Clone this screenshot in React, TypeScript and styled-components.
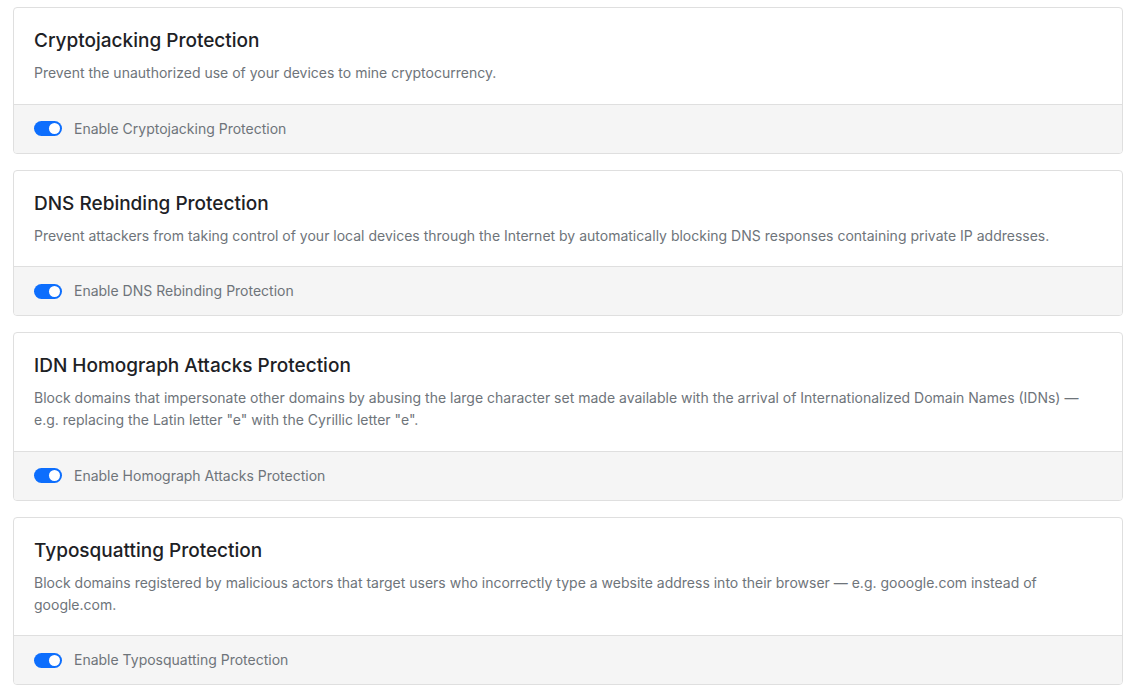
import React from 'react';
import styled, { createGlobalStyle } from 'styled-components';

const GlobalStyle = createGlobalStyle`
  body {
    margin: 0;
    background: #ffffff;
    font-family: Inter, "Noto Sans", "Liberation Sans", sans-serif;
    -webkit-font-smoothing: antialiased;
  }
`;

const Page = styled.div`
  display: flex;
  flex-direction: column;
  gap: 16px;
  padding: 7px 15px 14px 13px;
`;

const Card = styled.section`
  display: flex;
  flex-direction: column;
  border: 1px solid #dfdfdf;
  border-radius: 4px;
  background: #ffffff;
  overflow: hidden;
`;

const CardBody = styled.div`
  padding: 21px 20px 19.5px;
`;

const Title = styled.h5`
  margin: 0 0 9px;
  font-size: 19px;
  line-height: 24px;
  font-weight: 500;
  color: #1d2125;
`;

const Description = styled.p`
  margin: 0;
  font-size: 14px;
  line-height: 22px;
  color: #6e747a;
`;

const CardFooter = styled.div`
  display: flex;
  align-items: center;
  gap: 12px;
  padding: 12px 20px;
  background: #f5f5f5;
  border-top: 1px solid #dfdfdf;
`;

const Switch = styled.span<{ $on: boolean }>`
  position: relative;
  flex: none;
  width: 28px;
  height: 15px;
  border-radius: 8px;
  background: ${(p) => (p.$on ? '#0d6efd' : '#dee2e6')};

  &::after {
    content: '';
    position: absolute;
    top: 2px;
    left: ${(p) => (p.$on ? '15px' : '2px')};
    width: 11px;
    height: 11px;
    border-radius: 50%;
    background: #ffffff;
  }
`;

const SwitchLabel = styled.label`
  font-size: 14px;
  line-height: 24px;
  color: #6e747a;
`;

const protections = [
  {
    title: 'Cryptojacking Protection',
    text: 'Prevent the unauthorized use of your devices to mine cryptocurrency.',
    label: 'Enable Cryptojacking Protection',
  },
  {
    title: 'DNS Rebinding Protection',
    text: 'Prevent attackers from taking control of your local devices through the Internet by automatically blocking DNS responses containing private IP addresses.',
    label: 'Enable DNS Rebinding Protection',
  },
  {
    title: 'IDN Homograph Attacks Protection',
    text: 'Block domains that impersonate other domains by abusing the large character set made available with the arrival of Internationalized Domain Names (IDNs) — e.g. replacing the Latin letter "e" with the Cyrillic letter "е".',
    label: 'Enable Homograph Attacks Protection',
  },
  {
    title: 'Typosquatting Protection',
    text: 'Block domains registered by malicious actors that target users who incorrectly type a website address into their browser — e.g. gooogle.com instead of google.com.',
    label: 'Enable Typosquatting Protection',
  },
];

const App: React.FC = () => {
  return (
    <>
      <GlobalStyle />
      <Page>
        {protections.map((item) => (
          <Card key={item.title}>
            <CardBody>
              <Title>{item.title}</Title>
              <Description>{item.text}</Description>
            </CardBody>
            <CardFooter>
              <Switch $on role="switch" aria-checked="true" />
              <SwitchLabel>{item.label}</SwitchLabel>
            </CardFooter>
          </Card>
        ))}
      </Page>
    </>
  );
};

export default App;
